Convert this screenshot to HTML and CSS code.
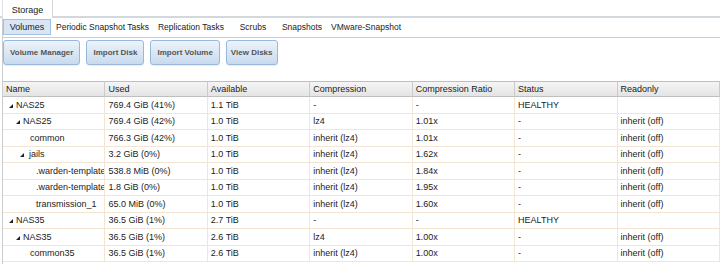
FILE: index.html
```html
<!DOCTYPE html>
<html lang="en">
<head>
    <meta charset="UTF-8">
    <meta name="viewport" content="width=device-width, initial-scale=1.0">
    <title>Storage - Volumes</title>
    <link rel="stylesheet" href="styles.css">
</head>
<body>
    <!-- Top level tab -->
    <div class="top-tabs">
        <span class="top-tab">Storage</span>
    </div>

    <div class="panel">
        <!-- Sub tabs -->
        <nav class="sub-tabs">
            <a class="sub-tab active" href="#volumes">Volumes</a>
            <a class="sub-tab" href="#periodic">Periodic Snapshot Tasks</a>
            <a class="sub-tab" href="#replication">Replication Tasks</a>
            <a class="sub-tab" href="#scrubs">Scrubs</a>
            <a class="sub-tab" href="#snapshots">Snapshots</a>
            <a class="sub-tab" href="#vmware">VMware-Snapshot</a>
        </nav>

        <!-- Action buttons -->
        <div class="actions">
            <button class="btn">Volume Manager</button>
            <button class="btn">Import Disk</button>
            <button class="btn">Import Volume</button>
            <button class="btn">View Disks</button>
        </div>

        <!-- Volume tree grid -->
        <table class="grid">
            <thead>
                <tr>
                    <th>Name</th>
                    <th>Used</th>
                    <th>Available</th>
                    <th>Compression</th>
                    <th>Compression Ratio</th>
                    <th>Status</th>
                    <th>Readonly</th>
                </tr>
            </thead>
            <tbody>
                <tr>
                    <td class="name lvl0"><span class="exp"></span>NAS25</td>
                    <td>769.4 GiB (41%)</td>
                    <td>1.1 TiB</td>
                    <td>-</td>
                    <td>-</td>
                    <td>HEALTHY</td>
                    <td></td>
                </tr>
                <tr>
                    <td class="name lvl1"><span class="exp"></span>NAS25</td>
                    <td>769.4 GiB (42%)</td>
                    <td>1.0 TiB</td>
                    <td>lz4</td>
                    <td>1.01x</td>
                    <td>-</td>
                    <td>inherit (off)</td>
                </tr>
                <tr>
                    <td class="name leaf2">common</td>
                    <td>766.3 GiB (42%)</td>
                    <td>1.0 TiB</td>
                    <td>inherit (lz4)</td>
                    <td>1.01x</td>
                    <td>-</td>
                    <td>inherit (off)</td>
                </tr>
                <tr>
                    <td class="name lvl2"><span class="exp"></span>jails</td>
                    <td>3.2 GiB (0%)</td>
                    <td>1.0 TiB</td>
                    <td>inherit (lz4)</td>
                    <td>1.62x</td>
                    <td>-</td>
                    <td>inherit (off)</td>
                </tr>
                <tr>
                    <td class="name leaf3"><span class="clip">.warden-template-pluginjail</span></td>
                    <td>538.8 MiB (0%)</td>
                    <td>1.0 TiB</td>
                    <td>inherit (lz4)</td>
                    <td>1.84x</td>
                    <td>-</td>
                    <td>inherit (off)</td>
                </tr>
                <tr>
                    <td class="name leaf3"><span class="clip">.warden-template-standard</span></td>
                    <td>1.8 GiB (0%)</td>
                    <td>1.0 TiB</td>
                    <td>inherit (lz4)</td>
                    <td>1.95x</td>
                    <td>-</td>
                    <td>inherit (off)</td>
                </tr>
                <tr>
                    <td class="name leaf3">transmission_1</td>
                    <td>65.0 MiB (0%)</td>
                    <td>1.0 TiB</td>
                    <td>inherit (lz4)</td>
                    <td>1.60x</td>
                    <td>-</td>
                    <td>inherit (off)</td>
                </tr>
                <tr>
                    <td class="name lvl0"><span class="exp"></span>NAS35</td>
                    <td>36.5 GiB (1%)</td>
                    <td>2.7 TiB</td>
                    <td>-</td>
                    <td>-</td>
                    <td>HEALTHY</td>
                    <td></td>
                </tr>
                <tr>
                    <td class="name lvl1"><span class="exp"></span>NAS35</td>
                    <td>36.5 GiB (1%)</td>
                    <td>2.6 TiB</td>
                    <td>lz4</td>
                    <td>1.00x</td>
                    <td>-</td>
                    <td>inherit (off)</td>
                </tr>
                <tr>
                    <td class="name leaf2">common35</td>
                    <td>36.5 GiB (1%)</td>
                    <td>2.6 TiB</td>
                    <td>inherit (lz4)</td>
                    <td>1.00x</td>
                    <td>-</td>
                    <td>inherit (off)</td>
                </tr>
            </tbody>
        </table>
    </div>
</body>
</html>
```

FILE: styles.css
```css
/* Reset and basic styles */
* {
    margin: 0;
    padding: 0;
    box-sizing: border-box;
}

body {
    font-family: "Liberation Sans", Arial, sans-serif;
    font-size: 9px;
    color: #222;
    background-color: #fff;
    overflow: hidden;
}

/* Top tab */
.top-tabs {
    height: 18px;
    border-bottom: 2px solid #d3d8dd;
    padding-left: 2px;
    display: flex;
}

.top-tab {
    width: 51px;
    height: 18px;
    background: #fff;
    border-left: 1px solid #dde1e5;
    border-right: 1px solid #d3d8dd;
    display: flex;
    align-items: center;
    justify-content: center;
    padding-top: 1px;
}

/* Panel */
.panel {
    margin-left: 2px;
    border-left: 1px solid #c9ccd0;
    min-height: 300px;
}

.sub-tabs {
    display: flex;
    gap: 1px;
    padding: 1px 0 2px;
    border-bottom: 1px solid #c6cdd4;
    font-size: 8.5px;
}

.sub-tab {
    min-width: 48px;
    height: 16px;
    padding: 0 3px;
    display: flex;
    align-items: center;
    justify-content: center;
    color: #222;
    text-decoration: none;
    border: 1px solid transparent;
}

.sub-tab.active {
    font-size: 9px;
    background: #d7e5f5;
    border-color: #a3c1e2;
}

/* Buttons */
.actions {
    display: flex;
    gap: 6px;
    padding-top: 2px;
}

.btn {
    height: 25px;
    padding: 0 6px;
    font-family: "Liberation Sans", Arial, sans-serif;
    font-size: 8px;
    font-weight: bold;
    color: #555;
    background: linear-gradient(#edf3fa, #c8daef);
    border: 1px solid #98b8dc;
    border-radius: 3px;
    box-shadow: 0 1px 1px rgba(0,0,0,0.08);
}

.btn:last-child {
    padding: 0 4px;
}

/* Grid */
.grid {
    width: 100%;
    margin-top: 16px;
    table-layout: fixed;
    border-collapse: separate;
    border-spacing: 0;
}

.grid th {
    height: 16px;
    padding: 0 3px;
    text-align: left;
    font-weight: normal;
    background: linear-gradient(#f5f5f5, #e4e4e4);
    border-top: 1px solid #bfbfbf;
    border-bottom: 1px solid #bfbfbf;
    border-right: 1px solid #cbcbcb;
}

.grid td {
    height: 16.5px;
    padding: 0 3px;
    white-space: nowrap;
    overflow: hidden;
    border-bottom: 1px solid #f3e4d4;
    border-right: 1px solid #f3e4d4;
}

.clip {
    display: inline-block;
    max-width: 100%;
    overflow: hidden;
    vertical-align: top;
}

/* Tree indentation */
.grid td.lvl0 { padding-left: 6px; }
.grid td.lvl1 { padding-left: 13px; }
.grid td.lvl2 { padding-left: 17px; }
.grid td.leaf2 { padding-left: 27px; }
.grid td.leaf3 { padding-left: 33px; padding-right: 0; }

.exp {
    display: inline-block;
    width: 0;
    height: 0;
    border-left: 4px solid transparent;
    border-bottom: 4px solid #222;
    margin-right: 3px;
    vertical-align: 0;
}

.grid td.lvl2 .exp {
    margin-right: 5px;
}
```
